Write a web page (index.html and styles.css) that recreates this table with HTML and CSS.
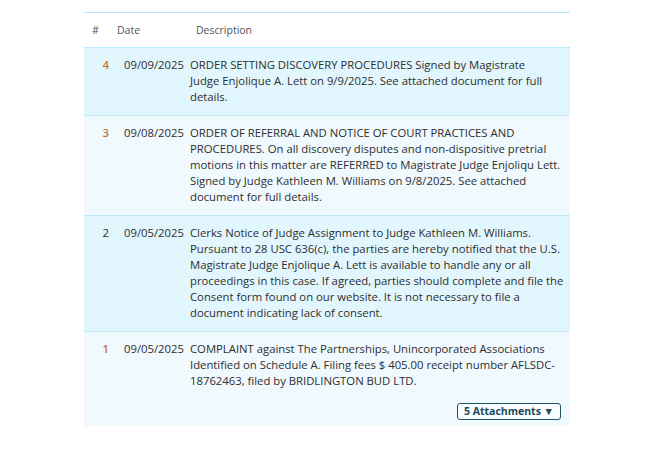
FILE: index.html
```html
<!DOCTYPE html>
<html lang="en">
<head>
<meta charset="utf-8">
<title>Docket</title>
<link rel="stylesheet" href="styles.css">
</head>
<body>
<div class="docket">
  <div class="head">
    <span class="h-num">#</span>
    <span class="h-date">Date</span>
    <span class="h-desc">Description</span>
  </div>
  <div class="entry dark">
    <div class="num acc">4</div>
    <div class="date">09/09/2025</div>
    <div class="desc">ORDER SETTING DISCOVERY PROCEDURES Signed by Magistrate<br>Judge Enjolique A. Lett on 9/9/2025. See attached document for full<br>details.</div>
  </div>
  <div class="entry light">
    <div class="num acc">3</div>
    <div class="date">09/08/2025</div>
    <div class="desc">ORDER OF REFERRAL AND NOTICE OF COURT PRACTICES AND<br>PROCEDURES. On all discovery disputes and non-dispositive pretrial<br>motions in this matter are REFERRED to Magistrate Judge Enjoliqu Lett.<br>Signed by Judge Kathleen M. Williams on 9/8/2025. See attached<br>document for full details.</div>
  </div>
  <div class="entry dark">
    <div class="num">2</div>
    <div class="date">09/05/2025</div>
    <div class="desc">Clerks Notice of Judge Assignment to Judge Kathleen M. Williams.<br>Pursuant to 28 USC 636(c), the parties are hereby notified that the U.S.<br>Magistrate Judge Enjolique A. Lett is available to handle any or all<br>proceedings in this case. If agreed, parties should complete and file the<br>Consent form found on our website. It is not necessary to file a<br>document indicating lack of consent.</div>
  </div>
  <div class="entry light last">
    <div class="num acc">1</div>
    <div class="date">09/05/2025</div>
    <div class="desc">COMPLAINT against The Partnerships, Unincorporated Associations<br>Identified on Schedule A. Filing fees $ 405.00 receipt number AFLSDC-<br>18762463, filed by BRIDLINGTON BUD LTD.
      <div class="attach-row"><button class="attach">5 Attachments ▼</button></div>
    </div>
  </div>
</div>
</body>
</html>
```
FILE: styles.css
```css
html, body {
  margin: 0;
  padding: 0;
  background: #ffffff;
}
body {
  font-family: "Open Sans", "Noto Sans", sans-serif;
  color: #2e2e2e;
}
.docket {
  margin: 12px 0 0 84px;
  width: 486px;
  border-top: 1px solid #b3eafc;
}
.head {
  display: grid;
  grid-template-columns: 25px 79px 1fr;
  padding-left: 8px;
  height: 34px;
  align-items: center;
  font-size: 10.5px;
  color: #555555;
  border-bottom: 1px solid #b9ebfa;
}
.entry {
  display: grid;
  grid-template-columns: 40px 66px 1fr;
  padding: 9px 9px 10px 0;
  font-size: 11.3px;
  line-height: 16px;
  border-bottom: 1px solid #bfe9f8;
}
.entry.dark { background: #e2f6fd; }
.entry.light { background: #f0f9fe; }
.entry.last { border-bottom: none; padding-bottom: 6px; }
.num {
  text-align: right;
  padding-right: 15px;
  color: #2e2e2e;
}
.num.acc { color: #c9703a; font-weight: 600; }
.desc { white-space: nowrap; }
.attach-row {
  display: flex;
  justify-content: flex-end;
  margin-top: 14px;
}
.attach {
  font-family: "Open Sans", "Noto Sans", sans-serif;
  font-weight: 700;
  font-size: 10.5px;
  line-height: 15px;
  color: #1c4a5a;
  background: #fafdff;
  border: 1px solid #1f5466;
  border-radius: 3px;
  padding: 0 6px;
  margin: 0;
}
```
